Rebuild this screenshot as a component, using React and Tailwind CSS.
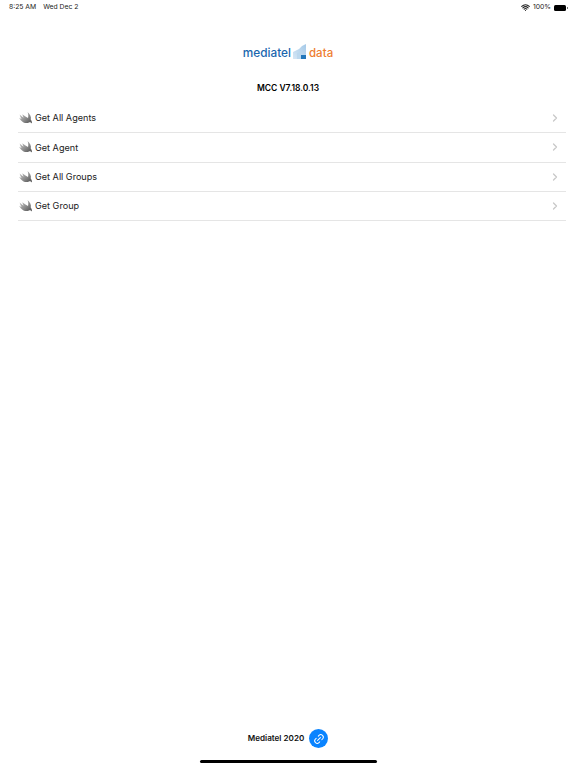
import React from 'react';
import { Link2, ChevronRight, Wifi } from 'lucide-react';

const rows = ['Get All Agents', 'Get Agent', 'Get All Groups', 'Get Group'];

function SwiftIcon() {
  return (
    <svg width="16" height="14" viewBox="0 0 16 14" className="shrink-0">
      <defs>
        <linearGradient id="swiftFill" x1="0" y1="0" x2="1" y2="1">
          <stop offset="0" stopColor="#d2d2d2" />
          <stop offset="0.55" stopColor="#8c8c8c" />
          <stop offset="1" stopColor="#4a4a4a" />
        </linearGradient>
      </defs>
      <path
        d="M9.500 1C12 3 13.500 6 12.700 8.500 13.700 9.800 14.200 11.200 13.900 12.500 13.100 11.200 12 10.900 11 11.400 9.500 12.200 7.500 12.200 5.500 11.400 3.700 10.600 2.200 9 1.200 6.800 2 7.400 2.800 7.800 3.600 8 2.700 6.800 2 5.300 1.600 3.500 3 4.900 4.300 6 5.600 6.800 5 5.700 4.600 4.600 4.300 3.300 6 4.800 8 6 10 7 10.500 5 10.400 3 9.500 1Z"
        fill="url(#swiftFill)"
      />
    </svg>
  );
}

function LogoMark() {
  return (
    <svg width="16" height="18" viewBox="0 0 16 18" className="shrink-0">
      <defs>
        <linearGradient id="logoFill" x1="0" y1="1" x2="1" y2="0">
          <stop offset="0" stopColor="#d7e7f5" />
          <stop offset="1" stopColor="#a4c9e8" />
        </linearGradient>
      </defs>
      <path d="M1 9 L7 6 L10 3 L14 1 L14 16 L1 16 Z" fill="url(#logoFill)" />
      <path d="M5 16 L5 10 L9 8 L9 16 Z" fill="#bcd8ee" />
      <path d="M9 16 L9 12 L14 12 L14 16 Z" fill="#2277bb" />
    </svg>
  );
}

export default function App() {
  return (
    <div className="w-[576px] h-[768px] bg-white flex flex-col overflow-hidden font-['Inter',sans-serif] text-black">
      {/* Status bar */}
      <div className="h-[14px] mt-[0.5px] flex justify-between items-center pl-[9px] pr-[8px] text-[6.8px] text-[#222]">
        <div className="flex gap-[7px]">
          <span>8:25 AM</span>
          <span>Wed Dec 2</span>
        </div>
        <div className="flex items-center gap-[2px]">
          <Wifi size={9} strokeWidth={3} />
          <span className="ml-[1px]">100%</span>
          <div className="w-[12px] h-[6px] bg-black rounded-[1.5px] ml-[1px]" />
          <div className="w-[1px] h-[2px] bg-[#777] -ml-[1px]" />
        </div>
      </div>

      {/* Logo */}
      <div className="mt-[29.500px] h-[20px] flex items-center justify-center">
        <span className="text-[11.8px] font-medium text-[#1a66ae]">mediatel</span>
        <div className="mx-[1px] -mt-[4px]">
          <LogoMark />
        </div>
        <span className="text-[11.5px] font-medium text-[#ee7d31]">data</span>
      </div>

      <div className="mt-[17px] text-center text-[8.5px] font-semibold leading-[14px]">MCC V7.18.0.13</div>

      {/* List */}
      <div className="mt-[9px] ml-[18px] mr-[10px]">
        {rows.map((row) => (
          <div key={row} className="h-[29.25px] flex items-center border-b border-[#e5e5e5]">
            <SwiftIcon />
            <span className="ml-[1px] text-[9.1px] text-[#222]">{row}</span>
            <ChevronRight size={12} strokeWidth={2.5} className="ml-auto mr-[5px] text-[#c8c8c8]" />
          </div>
        ))}
      </div>

      {/* Footer */}
      <div className="mt-auto flex flex-col items-center">
        <div className="flex items-center gap-[5px]">
          <span className="text-[8.1px] font-semibold text-[#111]">Mediatel 2020</span>
          <div className="w-[19px] h-[19px] rounded-full bg-[#0a84ff] flex items-center justify-center">
            <Link2 size={12} strokeWidth={2} className="text-white -rotate-45" />
          </div>
        </div>
        <div className="mt-[12px] mb-[5px] w-[177px] h-[3px] rounded-full bg-black" />
      </div>
    </div>
  );
}
